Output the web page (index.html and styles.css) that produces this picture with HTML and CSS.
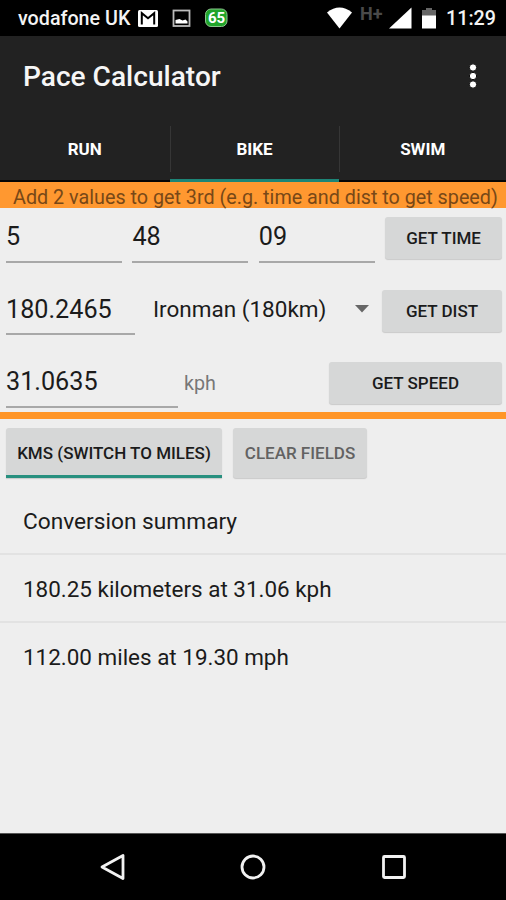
FILE: index.html
```html
<!DOCTYPE html>
<html lang="en">
<head>
<meta charset="utf-8">
<title>Pace Calculator</title>
<link rel="stylesheet" href="styles.css">
</head>
<body>
<div class="status">
  <span class="carrier">vodafone UK</span>
  <svg class="status-left" width="92" height="36" viewBox="0 0 92 36">
    <rect x="1" y="10" width="20" height="17" rx="1.5" fill="#fff"/>
    <path d="M4.800 24.500V13.200l6.200 5 6.200-5v11.300" fill="none" stroke="#000" stroke-width="2"/>
    <rect x="36.500" y="10.500" width="16" height="15.500" fill="none" stroke="#bbb" stroke-width="1.800"/>
    <path d="M38.500 23.500V20l4-1 3 1.500 3-1 2 2v2z" fill="#fff"/>
    <rect x="68.500" y="9" width="21.500" height="17.500" rx="5.500" fill="#21a42a" stroke="#8ac68c"/>
    <text x="79.500" y="23" text-anchor="middle" class="badge-text">65</text>
  </svg>
  <svg class="status-right" width="112" height="36" viewBox="0 0 112 36">
    <path d="M0 12.500Q12.500 2.500 25 12.500L12.500 28.500z" fill="#fff"/>
    <text x="33" y="20" class="network">H+</text>
    <path d="M62 28.500L84.500 7.500v21z" fill="#fff"/>
    <path d="M95 16V10h4V8h6v2h4v6z" fill="#666"/>
    <path d="M95 15.500h14v13H95z" fill="#fff"/>
  </svg>
  <span class="clock">11:29</span>
</div>
<header class="appbar">
  <h1>Pace Calculator</h1>
  <svg width="12" height="28" viewBox="0 0 12 28"><g fill="#fff" stroke="#0a0a0a" stroke-width="1"><circle cx="6" cy="5.500" r="3.700"/><circle cx="6" cy="14" r="3.700"/><circle cx="6" cy="22.500" r="3.700"/></g></svg>
</header>
<nav class="tabs">
  <div class="tab"><span>RUN</span></div>
  <div class="tab active"><span>BIKE</span></div>
  <div class="tab"><span>SWIM</span></div>
</nav>
<p class="hint">Add 2 values to get 3rd (e.g. time and dist to get speed)</p>
<main>
  <section class="form">
    <div class="row time">
      <div class="field">5</div>
      <div class="field">48</div>
      <div class="field">09</div>
      <div class="btn">GET TIME</div>
    </div>
    <div class="row dist">
      <div class="field">180.2465</div>
      <div class="spinner"><span>Ironman (180km)</span><svg width="14" height="8" viewBox="0 0 14 8"><path d="M0 0h14L7 7.500z" fill="#666"/></svg></div>
      <div class="btn">GET DIST</div>
    </div>
    <div class="row speed">
      <div class="field">31.0635</div>
      <div class="unit">kph</div>
      <div class="btn">GET SPEED</div>
    </div>
  </section>
  <div class="actions">
    <div class="btn toggle">KMS (SWITCH TO MILES)</div>
    <div class="btn clear">CLEAR FIELDS</div>
  </div>
  <ul class="summary">
    <li class="heading">Conversion summary</li>
    <li>180.25 kilometers at 31.06 kph</li>
    <li>112.00 miles at 19.30 mph</li>
  </ul>
</main>
<footer class="navbar">
  <svg width="28" height="28" viewBox="0 0 28 28"><path d="M24 2.500v23L3 14z"/></svg>
  <svg width="28" height="28" viewBox="0 0 28 28"><circle cx="14" cy="14" r="11"/></svg>
  <svg width="28" height="28" viewBox="0 0 28 28"><rect x="3.500" y="3.500" width="21" height="21" rx="1"/></svg>
</footer>
</body>
</html>
```

FILE: styles.css
```css
* { box-sizing: border-box; }
body {
  margin: 0;
  width: 506px;
  height: 900px;
  display: flex;
  flex-direction: column;
  overflow: hidden;
  background: #eee;
  color: #1b1b1b;
  font-family: Roboto, sans-serif;
  white-space: nowrap;
}
svg { display: block; flex: none; }

.status {
  flex: none;
  height: 36px;
  display: flex;
  background: #000;
  color: #f4f4f4;
  font-weight: 500;
  font-size: 19.700px;
  line-height: 38px;
}
.carrier { width: 119px; margin-left: 18px; }
.status-right { margin-left: 98px; }
.clock { margin-left: 7px; }
.badge-text { font: 700 15px Roboto, sans-serif; fill: #fff; }
.network { font: 700 18px Roboto, sans-serif; fill: #4a4a4a; }

.appbar {
  flex: none;
  height: 82px;
  display: flex;
  align-items: center;
  justify-content: space-between;
  padding: 0 27px 2px 23px;
  background: #222;
  color: #f6f6f6;
}
.appbar h1 { margin: 0; font-size: 28.100px; font-weight: 500; }

.tabs {
  flex: none;
  height: 63.500px;
  display: grid;
  grid-template-columns: 169.500px 169px 1fr;
  background: #222;
}
.tab {
  display: flex;
  justify-content: center;
  border-bottom: 2px solid #050505;
  padding-top: 8px;
  color: #fff;
  font-size: 17px;
  font-weight: 700;
  line-height: 46px;
}
.tab span { flex: 1; height: 46px; text-align: center; }
.tab + .tab span { border-left: 1px solid #363636; }
.tab.active { border-bottom: 3px solid #1d8577; }

.hint {
  flex: none;
  height: 26.500px;
  margin: 0;
  padding-left: 13px;
  background: #ff9830;
  color: #784817;
  font-size: 19.750px;
  line-height: 31px;
}

main { flex: 1; }
.form {
  height: 211px;
  padding: 0 4px 0 6px;
  border-bottom: 7px solid #ff9527;
}
.row { display: flex; align-items: flex-start; height: 72.500px; }
.field {
  height: 54.500px;
  border-bottom: 2px solid #a8a8a8;
  font-size: 25.200px;
  line-height: 58px;
}
.btn {
  display: flex;
  align-items: center;
  justify-content: center;
  height: 43px;
  border-radius: 3px;
  background: #d6d7d7;
  box-shadow: 0 1px 1px #c9c9c9;
  font-size: 17px;
  font-weight: 500;
}
.row .btn { height: 42px; margin: 9px 0 0 auto; }
.time .field { width: 116px; margin-right: 10.500px; }
.time .btn { width: 117px; }
.dist .field { width: 129px; }
.dist .btn { width: 120px; }
.spinner {
  flex: 1;
  display: flex;
  align-items: center;
  justify-content: space-between;
  height: 55px;
  padding: 1px 13px 0 18px;
  font-size: 22.500px;
}
.speed .field { width: 172px; }
.unit { margin-left: 6px; color: #777; font-size: 19.700px; line-height: 61px; }
.speed .btn { width: 173px; }

.actions { display: flex; gap: 11px; padding: 9px 6px 0; }
.actions .btn { height: 50px; }
.toggle { width: 216px; }
.actions .toggle { border-bottom: 3px solid #28907f; border-radius: 3px 3px 0 0; padding-top: 3px; }
.clear { width: 134px; color: #626262; }

.summary { margin: 9px 0 0; padding: 0; list-style: none; }
.summary li {
  height: 68px;
  padding-left: 23px;
  border-bottom: 2px solid #e2e2e2;
  font-size: 22.450px;
  line-height: 69px;
}
.summary .heading { font-size: 22.700px; }
.summary li:last-child { border-bottom: 0; }

.navbar {
  flex: none;
  height: 67px;
  display: flex;
  align-items: center;
  justify-content: center;
  gap: 112.500px;
  background: #000;
  border-top: 1px solid #555;
}
.navbar svg { fill: none; stroke: #f2f2f2; stroke-width: 2.800; stroke-linejoin: round; }
```
